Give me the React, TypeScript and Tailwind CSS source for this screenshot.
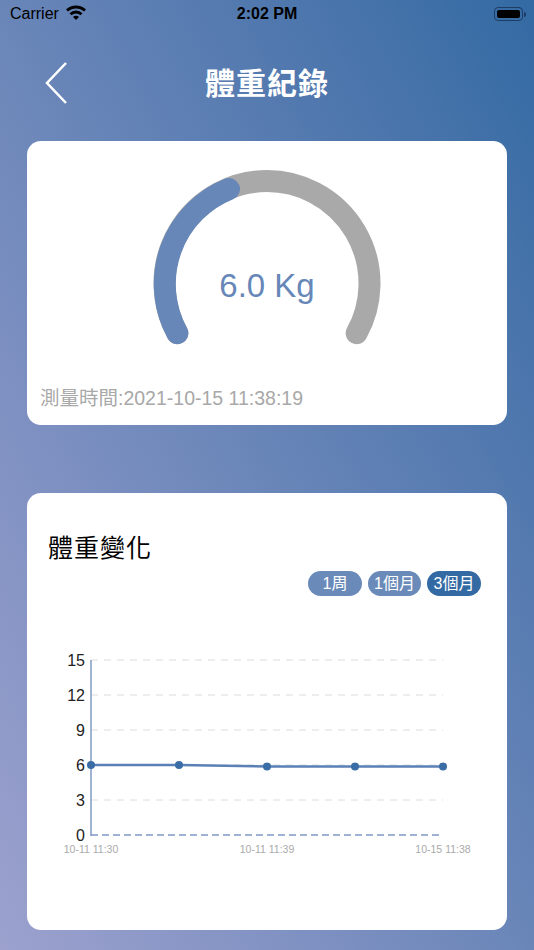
const font = { fontFamily: '"Liberation Sans", "Noto Sans CJK TC", sans-serif' };

function StatusBar() {
  return (
    <div className="relative h-7 flex items-center px-[10px] text-[16px] text-black">
      <span>Carrier</span>
      <svg width="22" height="16" viewBox="0 0 22 16" className="ml-[6px] -mt-1">
        <path d="M1 5.5a14.5 14.5 0 0 1 20 0l-2 2.1a11.6 11.6 0 0 0-16 0z" fill="#000" />
        <path d="M4.5 9.2a9.4 9.4 0 0 1 13 0l-2 2.1a6.4 6.4 0 0 0-9 0z" fill="#000" />
        <path d="M8 12.9a4.2 4.2 0 0 1 6 0l-3 3z" fill="#000" />
      </svg>
      <span className="absolute left-1/2 -translate-x-1/2 font-bold text-[16px]">2:02 PM</span>
      <div className="ml-auto flex items-center mr-[-2px]">
        <div className="w-[29px] h-[14px] rounded-[4px] border border-[#1d3c66] p-[2px]">
          <div className="w-full h-full rounded-[2px] bg-black" />
        </div>
        <div className="w-[2px] h-[5px] bg-[#1d3c66] rounded-r-sm ml-[1px]" />
      </div>
    </div>
  );
}

function Gauge() {
  return (
    <svg width="260" height="190" viewBox="0 0 260 190">
      <path
        d="M40.35 172.2 A102.5 102.5 0 1 1 219.65 172.2"
        fill="none"
        stroke="#a9a9a9"
        strokeWidth="22"
        strokeLinecap="round"
      />
      <path
        d="M40.35 172.2 A102.5 102.5 0 0 1 92 28"
        fill="none"
        stroke="#6687b8"
        strokeWidth="22"
        strokeLinecap="round"
      />
      <text x="130" y="136" textAnchor="middle" fontSize="33" fill="#6687b8" style={font}>
        6.0 Kg
      </text>
    </svg>
  );
}

const ticks = [15, 12, 9, 6, 3, 0];
const points = [
  [64, 165],
  [152, 165],
  [240, 166.5],
  [328, 166.5],
  [416, 166.5],
];

function Chart() {
  return (
    <svg width="480" height="270" viewBox="0 0 480 270" style={font}>
      {ticks.map((t, i) => {
        const y = 60 + i * 35;
        return (
          <g key={t}>
            {t !== 0 && (
              <line x1="64" y1={y} x2="416" y2={y} stroke="#dcdcdc" strokeWidth="1" strokeDasharray="7 6" />
            )}
            <text x="58" y={y + 6} textAnchor="end" fontSize="16" fill="#222">
              {t}
            </text>
          </g>
        );
      })}
      <line x1="64" y1="235" x2="416" y2="235" stroke="#7f9bc5" strokeWidth="1.5" strokeDasharray="7 4" />
      <line x1="64" y1="60" x2="64" y2="236" stroke="#7f9bc5" strokeWidth="1.5" />
      <polyline
        points={points.map((p) => p.join(",")).join(" ")}
        fill="none"
        stroke="#5b80b6"
        strokeWidth="2.5"
      />
      {points.map(([x, y]) => (
        <circle key={x} cx={x} cy={y} r="4" fill="#3a6ca6" />
      ))}
      <text x="64" y="253" textAnchor="middle" fontSize="10.5" fill="#aaa">10-11 11:30</text>
      <text x="240" y="253" textAnchor="middle" fontSize="10.5" fill="#aaa">10-11 11:39</text>
      <text x="416" y="253" textAnchor="middle" fontSize="10.5" fill="#aaa">10-15 11:38</text>
    </svg>
  );
}

export default function App() {
  return (
    <div
      className="w-[534px] h-[950px] overflow-hidden bg-linear-to-bl from-[#336aa3] to-[#9ca1ce]"
      style={font}
    >
      <StatusBar />

      <div className="relative h-[113px] flex items-center justify-center">
        <svg width="30" height="44" viewBox="0 0 30 44" className="absolute left-[42px] top-[33px]">
          <polyline points="24,2 5,22 24,42" fill="none" stroke="#fff" strokeWidth="2.5" />
        </svg>
        <h1 className="text-white text-[30px] font-bold tracking-[1px] -mt-[2px]">體重紀錄</h1>
      </div>

      <div className="mx-[27px] h-[284px] bg-white rounded-[14px] flex flex-col items-center">
        <div className="mt-[20px]">
          <Gauge />
        </div>
        <p className="self-start ml-[13px] mt-[35px] text-[19.5px] leading-[24px] text-[#a8a8a8]">
          測量時間:2021-10-15 11:38:19
        </p>
      </div>

      <div className="mx-[27px] mt-[68px] h-[437px] bg-white rounded-[14px] flex flex-col">
        <h2 className="ml-[21px] mt-[40px] text-[25px] text-black leading-[30px] tracking-[1px]">體重變化</h2>
        <div className="flex justify-end gap-[6px] mr-[26px] mt-[8px]">
          <button className="w-[54px] h-[25px] rounded-full bg-[#6a8ab9] text-white text-[16px] leading-none">1周</button>
          <button className="w-[53px] h-[25px] rounded-full bg-[#6a8ab9] text-white text-[16px] leading-none">1個月</button>
          <button className="w-[54px] h-[25px] rounded-full bg-[#346aa3] text-white text-[16px] leading-none">3個月</button>
        </div>
        <div className="mt-[4px]">
          <Chart />
        </div>
      </div>
    </div>
  );
}
